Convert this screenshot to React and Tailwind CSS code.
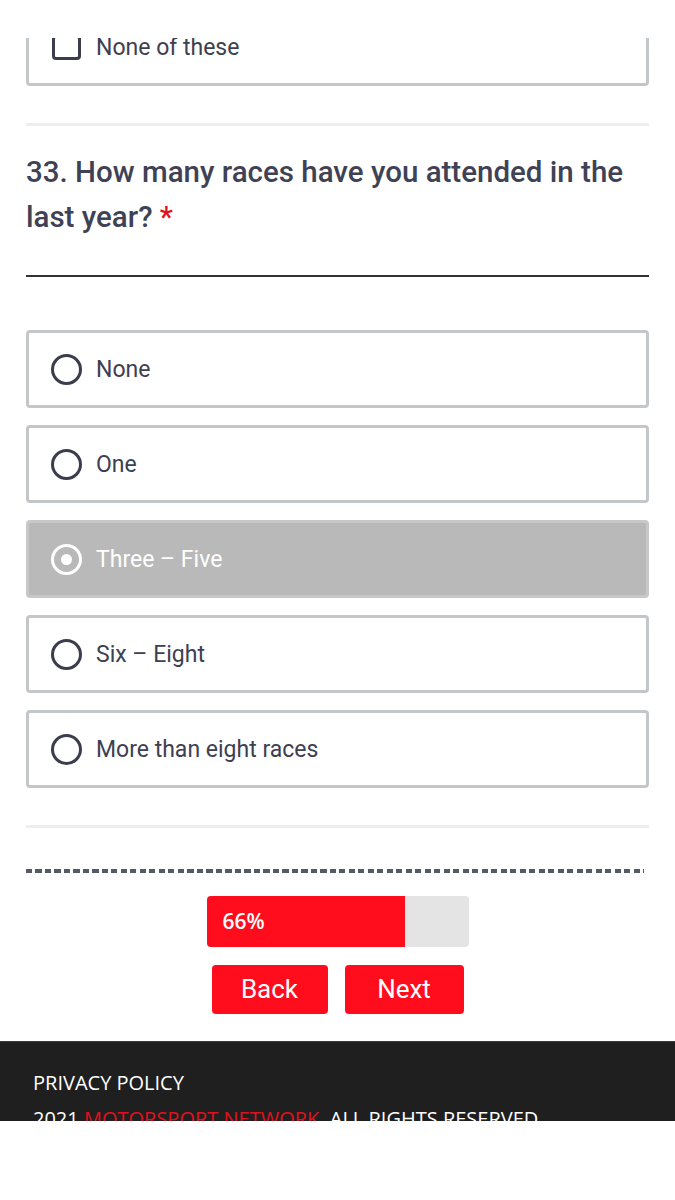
import React from "react";

const options = [
  { label: "None", selected: false },
  { label: "One", selected: false },
  { label: "Three – Five", selected: true },
  { label: "Six – Eight", selected: false },
  { label: "More than eight races", selected: false },
];

function Option({ label, selected }) {
  return (
    <div
      className={
        "h-[78px] rounded-[4px] border-[3px] flex items-center pl-[22px] " +
        (selected ? "bg-[#b9b9b9] border-[#c6c8ca]" : "bg-white border-[#c4c7ca]")
      }
    >
      {selected ? (
        <span className="w-[31px] h-[31px] rounded-full border-[3px] border-white flex items-center justify-center">
          <span className="w-[11px] h-[11px] rounded-full bg-white" />
        </span>
      ) : (
        <span className="w-[31px] h-[31px] rounded-full border-[3px] border-[#3b3d4d]" />
      )}
      <span
        className={
          "ml-[14px] text-[23px] leading-none " +
          (selected ? "text-white" : "text-[#3d4051]")
        }
      >
        {label}
      </span>
    </div>
  );
}

export default function App() {
  return (
    <div className="w-full h-[1200px] bg-white font-['Roboto',sans-serif] overflow-hidden">
      <div className="h-[38px]" />
      <div className="h-[48px] overflow-hidden px-[26px]">
        <div className="-mt-[30px] h-[78px] rounded-[4px] border-[3px] border-[#c4c7ca] flex items-center pl-[23px]">
          <span className="w-[29px] h-[25px] rounded-[4px] border-[3px] border-[#3b3d4d]" />
          <span className="ml-[15px] text-[23px] leading-none text-[#3d4051]">None of these</span>
        </div>
      </div>
      <div className="px-[26px]">
        <div className="mt-[37px] h-[3px] bg-[#eeeeee]" />
        <h2 className="mt-[24px] text-[29.5px] leading-[45px] font-medium text-[#3f4254]">
          33. How many races have you attended in the last year?{" "}
          <span className="text-[#e0111e]">*</span>
        </h2>
        <div className="mt-[35px] h-[2px] bg-[#333333]" />
        <div className="mt-[53px] flex flex-col gap-[17px]">
          {options.map((o) => (
            <Option key={o.label} {...o} />
          ))}
        </div>
        <div className="mt-[37px] h-[3px] bg-[#eeeeee]" />
        <div className="mt-[41px] mr-[5px] h-[4px] bg-[repeating-linear-gradient(90deg,#555a66_0px,#555a66_6px,transparent_6px,transparent_9.5px)]" />
        <div className="mt-[23px] flex justify-center">
          <div className="w-[262px] h-[51px] rounded-[4px] bg-[#e4e4e4] overflow-hidden">
            <div className="w-[198px] h-full bg-[#ff0d1d] flex items-center pl-[16px]">
              <span className="text-white text-[21px] font-semibold font-['Open_Sans',sans-serif]">66%</span>
            </div>
          </div>
        </div>
        <div className="mt-[18px] flex justify-center gap-[17px]">
          <button className="w-[116px] h-[49px] rounded-[4px] bg-[#ff0d1d] text-white text-[26px]">Back</button>
          <button className="w-[119px] h-[49px] rounded-[4px] bg-[#ff0d1d] text-white text-[26px]">Next</button>
        </div>
      </div>
      <footer className="mt-[27px] h-[80px] overflow-hidden bg-[#1f1f1f] border-t border-[#3a3a3a] px-[33px] font-['Open_Sans',sans-serif]">
        <div className="pt-[28px] text-[20px] leading-[26px] text-white">PRIVACY POLICY</div>
        <div className="mt-[10px] text-[20px] leading-[26px] text-white">
          2021 <span className="text-[#e0111e]">MOTORSPORT NETWORK</span>. ALL RIGHTS RESERVED
        </div>
      </footer>
    </div>
  );
}
